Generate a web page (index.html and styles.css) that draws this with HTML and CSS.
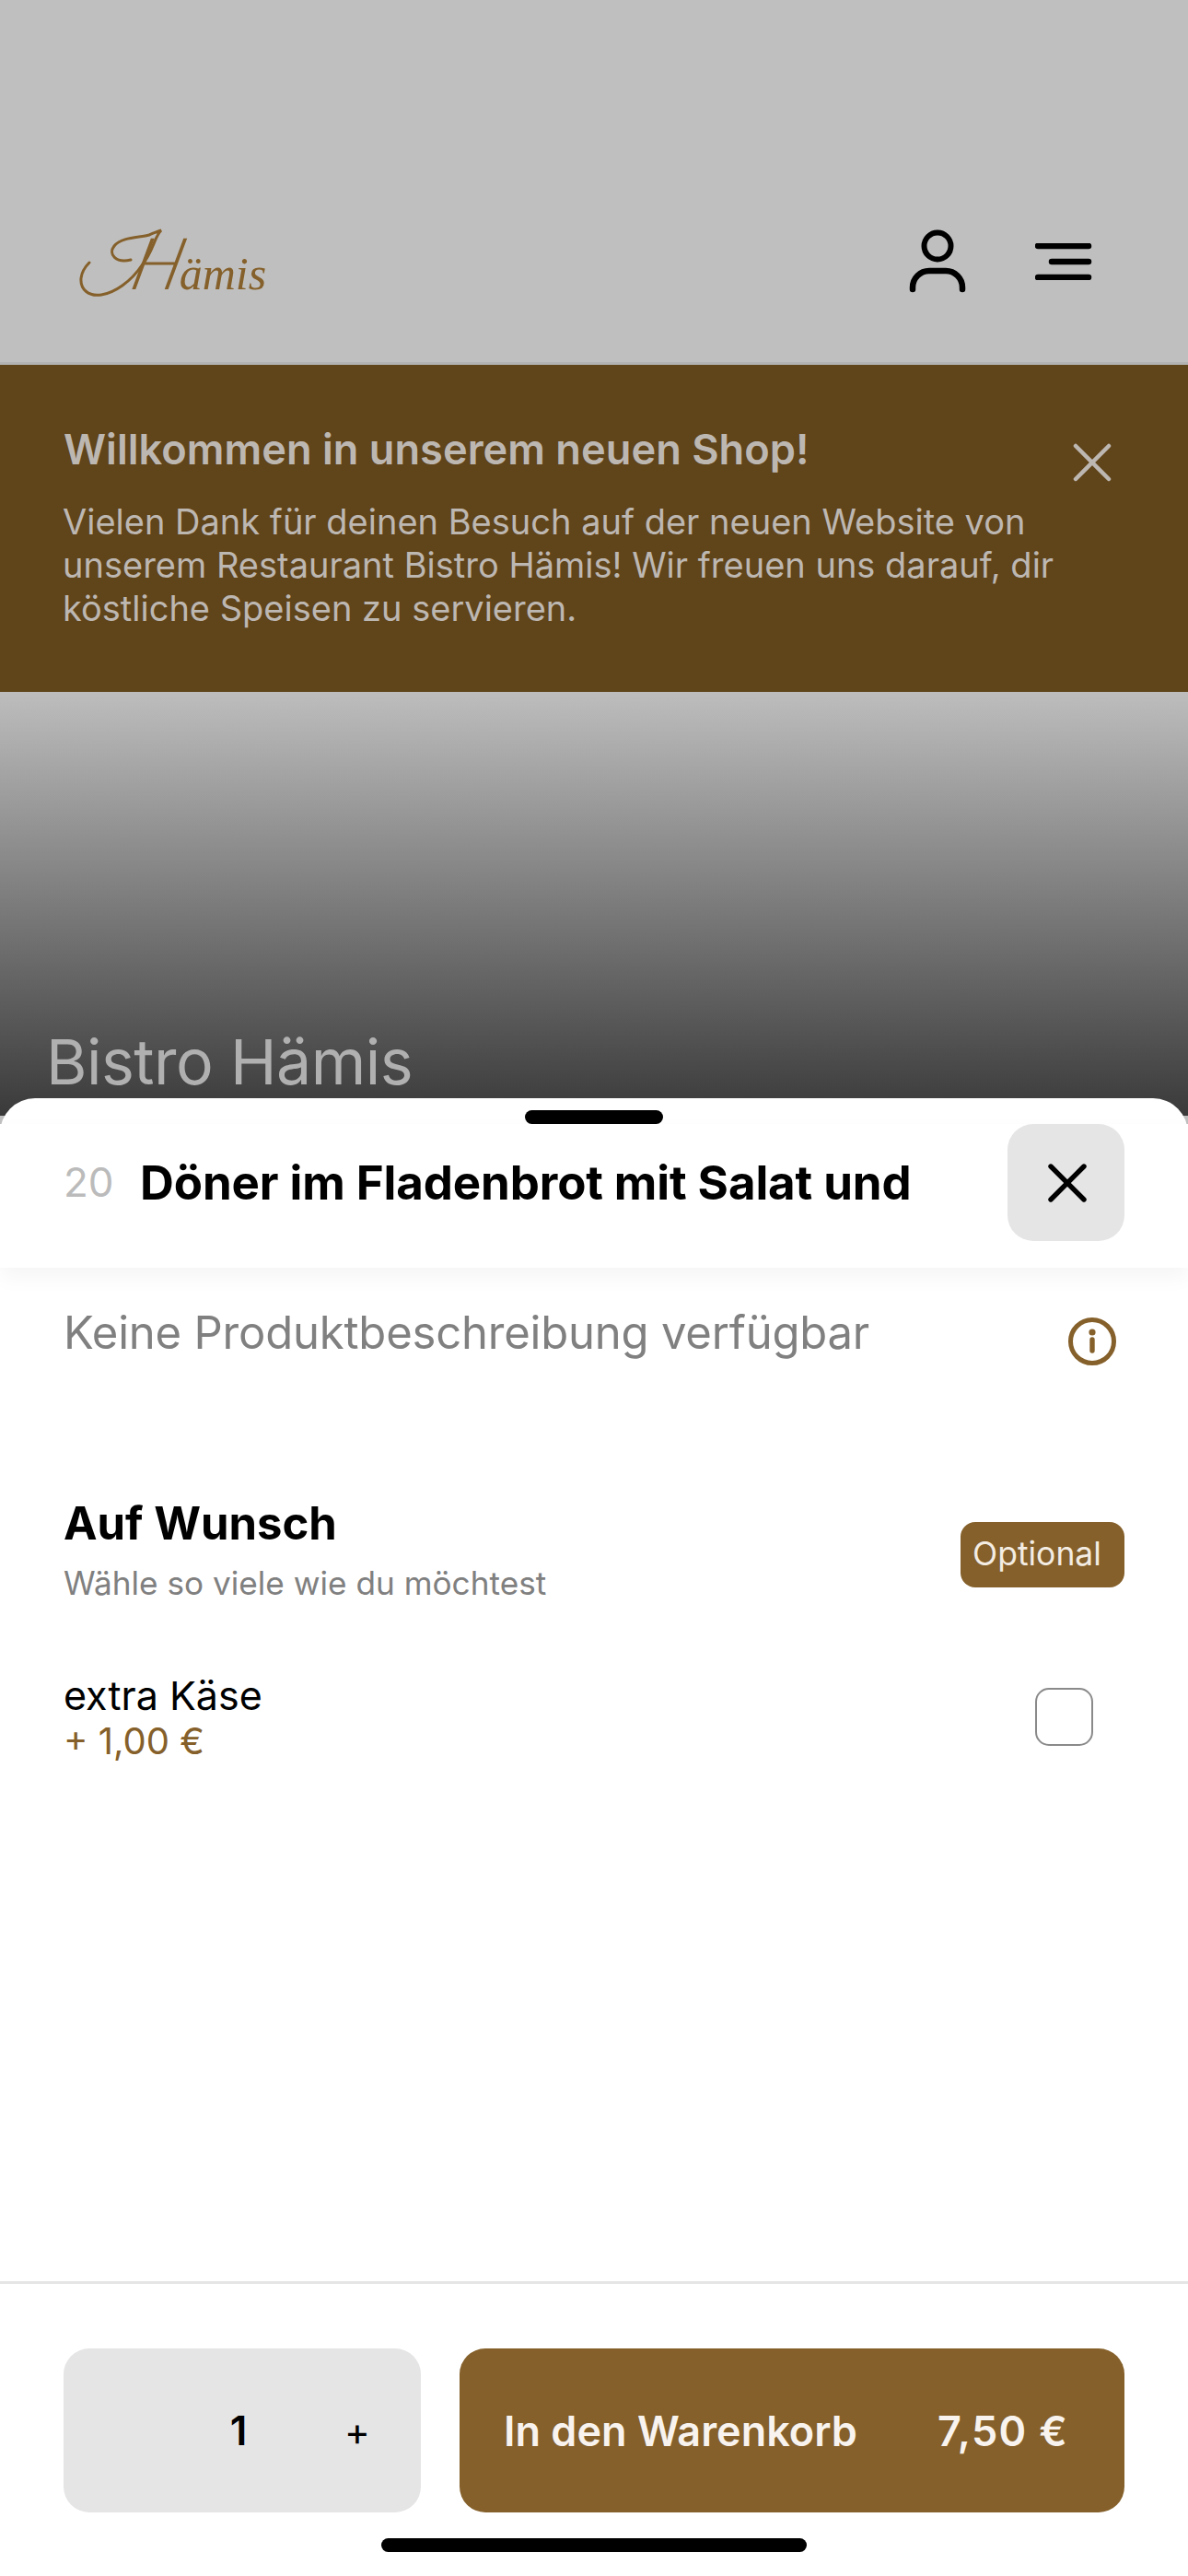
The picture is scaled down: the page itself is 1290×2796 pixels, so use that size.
FILE: index.html
```html
<!DOCTYPE html>
<html lang="de">
<head>
<meta charset="utf-8">
<title>Bistro Hämis</title>
<link rel="stylesheet" href="styles.css">
</head>
<body>
<div class="page">
  <header class="topbar">
    <div class="logo">
      <svg class="logo-swash" width="210" height="90" viewBox="0 0 210 90" fill="none" aria-hidden="true">
        <path d="M56 36C40 40 31 30 38 21C46 11 66 12 76 9C81 7 85 5 89 4C82 10 80 28 68 42C56 60 38 72 24 74C10 76 1 68 2 56C3 48 7 43 11 39" stroke="#85602a" stroke-width="3" stroke-linecap="round"/>
      </svg>
      <span class="logo-text"><span class="logo-h">H</span>ämis</span>
    </div>
    <div class="top-icons">
      <svg class="icon-user" width="66" height="72" viewBox="0 0 66 72" fill="none" aria-hidden="true">
        <circle cx="33" cy="19" r="14.5" stroke="#000" stroke-width="6"/>
        <path d="M6 66V64A18 18 0 0 1 24 46H42A18 18 0 0 1 60 64V66" stroke="#000" stroke-width="6.5" stroke-linecap="round"/>
      </svg>
      <svg class="icon-menu" width="62" height="40" viewBox="0 0 62 40" fill="none" aria-hidden="true">
        <path d="M3 3H58M18 20H58M3 37H58" stroke="#000" stroke-width="6.5" stroke-linecap="round"/>
      </svg>
    </div>
  </header>
  <section class="banner">
    <div class="banner-copy">
      <h2 class="banner-title">Willkommen in unserem neuen Shop!</h2>
      <p class="banner-text">Vielen Dank für deinen Besuch auf der neuen Website von unserem Restaurant Bistro Hämis! Wir freuen uns darauf, dir köstliche Speisen zu servieren.</p>
    </div>
    <svg class="banner-close" width="42" height="42" viewBox="0 0 42 42" fill="none" aria-hidden="true">
      <path d="M3 3L39 39M39 3L3 39" stroke="#bdb7b2" stroke-width="4.5" stroke-linecap="round"/>
    </svg>
  </section>
  <section class="hero">
    <h1 class="hero-title">Bistro Hämis</h1>
  </section>

  <div class="sheet">
    <div class="grab"></div>
    <div class="sheet-head">
      <span class="dish-no">20</span>
      <span class="dish-name">Döner im Fladenbrot mit Salat und</span>
      <button class="close-btn" aria-label="Schließen">
        <svg width="44" height="44" viewBox="0 0 44 44" fill="none" aria-hidden="true">
          <path d="M4 4L40 40M40 4L4 40" stroke="#000" stroke-width="5.4" stroke-linecap="round"/>
        </svg>
      </button>
    </div>
    <div class="sheet-body">
      <div class="desc-row">
        <p class="desc">Keine Produktbeschreibung verfügbar</p>
        <svg class="info" width="54" height="54" viewBox="0 0 54 54" fill="none" aria-hidden="true">
          <circle cx="27" cy="27" r="23.5" stroke="#85602a" stroke-width="5"/>
          <circle cx="27" cy="17" r="3.6" fill="#85602a"/>
          <path d="M27 25V37" stroke="#85602a" stroke-width="5.4" stroke-linecap="round"/>
        </svg>
      </div>
      <div class="group-head">
        <div>
          <h3 class="group-title">Auf Wunsch</h3>
          <p class="group-sub">Wähle so viele wie du möchtest</p>
        </div>
        <span class="chip">Optional</span>
      </div>
      <div class="option">
        <div>
          <div class="option-name">extra Käse</div>
          <div class="option-price">+ 1,00 €</div>
        </div>
        <span class="checkbox"></span>
      </div>
    </div>
    <footer class="sheet-foot">
      <div class="qty">
        <span class="qty-minus"></span>
        <span class="qty-num">1</span>
        <span class="qty-plus">+</span>
      </div>
      <button class="add-btn"><span>In den Warenkorb</span><span class="add-price">7,50 €</span></button>
    </footer>
  </div>
  <div class="home-indicator"></div>
</div>
</body>
</html>
```
FILE: styles.css
```css
* { box-sizing: border-box; }
html, body { margin: 0; padding: 0; }
body { font-family: Inter, "Noto Sans", sans-serif; background: #fff; }
h1, h2, h3, p { margin: 0; }
button { font: inherit; border: 0; padding: 0; }

.page { position: relative; width: 1290px; height: 2796px; overflow: hidden; background: #bfbfbf; }

.topbar {
  height: 396px;
  padding: 246px 104px 0 86px;
  display: flex;
  justify-content: space-between;
  align-items: flex-start;
  background: #bfbfbf;
  border-bottom: 3px solid #b2b2b2;
}
.logo { position: relative; width: 210px; height: 90px; }
.logo-swash { position: absolute; left: 0; top: 0; }
.logo-text {
  display: block;
  padding-left: 60px;
  font-family: "Liberation Serif", serif;
  font-style: italic;
  font-size: 50px;
  line-height: 76px;
  color: #85602a;
  white-space: nowrap;
}
.logo-h {
  display: inline-block;
  font-family: Lato, sans-serif;
  font-weight: 300;
  font-size: 78px;
  line-height: 76px;
  margin-right: -6px;
  transform: skewX(-14deg);
}
.top-icons { display: flex; gap: 73px; margin-top: 2px; }
.icon-menu { margin-top: 16px; }

.banner {
  height: 355px;
  padding: 66px 83px 0 68px;
  display: flex;
  justify-content: space-between;
  align-items: flex-start;
  background: #60441a;
}
.banner-copy { width: 1090px; }
.banner-title { font-size: 45.2px; line-height: 52px; font-weight: 600; color: #bdb7b2; margin: 0 0 29px 1px; }
.banner-text { font-size: 38px; line-height: 47px; color: #bdb7b2; }
.banner-close { margin-top: 19px; }

.hero {
  height: 460px;
  padding: 361px 0 0 50px;
  background: linear-gradient(#bdbdbd, #3a3a3a);
}
.hero-title { font-size: 68px; line-height: 80px; font-weight: 400; letter-spacing: -.5px; color: #b0b0b0; }

.sheet {
  position: absolute;
  left: 0;
  top: 1192px;
  width: 1290px;
  height: 1604px;
  display: flex;
  flex-direction: column;
  background: #fff;
  border-radius: 38px 38px 0 0;
}
.grab { width: 150px; height: 15px; margin: 13px auto 0; background: #000; border-radius: 8px; }
.sheet-head {
  position: relative;
  height: 156px;
  flex: none;
  display: flex;
  align-items: flex-start;
  padding: 0 69px 0 69px;
  background: #fff;
  box-shadow: 0 10px 22px rgba(0, 0, 0, .045);
}
.dish-no { font-size: 44px; line-height: 127px; color: #bbb; width: 83px; flex: none; }
.dish-name { flex: 1; font-size: 51px; line-height: 127px; font-weight: 700; letter-spacing: -.1px; color: #000; white-space: nowrap; overflow: hidden; }
.close-btn {
  width: 127px;
  height: 127px;
  flex: none;
  display: flex;
  align-items: center;
  justify-content: center;
  padding-left: 2px;
  background: #e5e5e5;
  border-radius: 28px;
}

.sheet-body { flex: 1; padding: 0 69px; }
.desc-row { display: flex; justify-content: space-between; align-items: flex-start; padding-top: 39px; height: 247px; }
.desc { font-size: 49px; line-height: 64px; letter-spacing: -.2px; color: #808080; }
.info { margin: 14px 8px 0 0; }

.group-head { display: flex; justify-content: space-between; align-items: flex-start; }
.group-title { font-size: 49px; line-height: 62px; font-weight: 700; color: #000; }
.group-sub { font-size: 35.2px; line-height: 44px; color: #808080; margin-top: 11px; }
.chip {
  width: 178px;
  height: 71px;
  margin-top: 29px;
  padding-left: 13px;
  background: #85602a;
  color: #f3ece3;
  border-radius: 16px;
  font-size: 35.5px;
  line-height: 69px;
}

.option { display: flex; justify-content: space-between; align-items: flex-start; margin-top: 74px; }
.option-name { font-size: 43px; line-height: 52px; color: #000; }
.option-price { font-size: 40px; line-height: 48px; color: #85602a; }
.checkbox {
  width: 63px;
  height: 63px;
  margin: 18px 34px 0 0;
  border: 2px solid #8a8a8a;
  border-radius: 15px;
}

.sheet-foot {
  height: 320px;
  flex: none;
  display: flex;
  gap: 42px;
  padding: 70px 69px 0;
  border-top: 3px solid #e5e5e5;
}
.qty {
  width: 388px;
  height: 178px;
  display: flex;
  align-items: center;
  background: #e5e5e5;
  border-radius: 28px;
  color: #000;
}
.qty-minus { width: 180px; }
.qty-num { width: 20px; font-size: 44px; font-weight: 600; text-align: center; }
.qty-plus { margin-left: 105px; font-size: 42px; }
.add-btn {
  width: 722px;
  height: 178px;
  padding: 0 61px 0 48px;
  display: flex;
  justify-content: space-between;
  align-items: center;
  background: #85602a;
  color: #f8f3ee;
  border-radius: 28px;
  font-size: 45px;
  font-weight: 600;
}
.add-price { letter-spacing: 1.3px; }
.home-indicator {
  position: absolute;
  left: 414px;
  top: 2755px;
  width: 462px;
  height: 15px;
  background: #000;
  border-radius: 8px;
}
```
